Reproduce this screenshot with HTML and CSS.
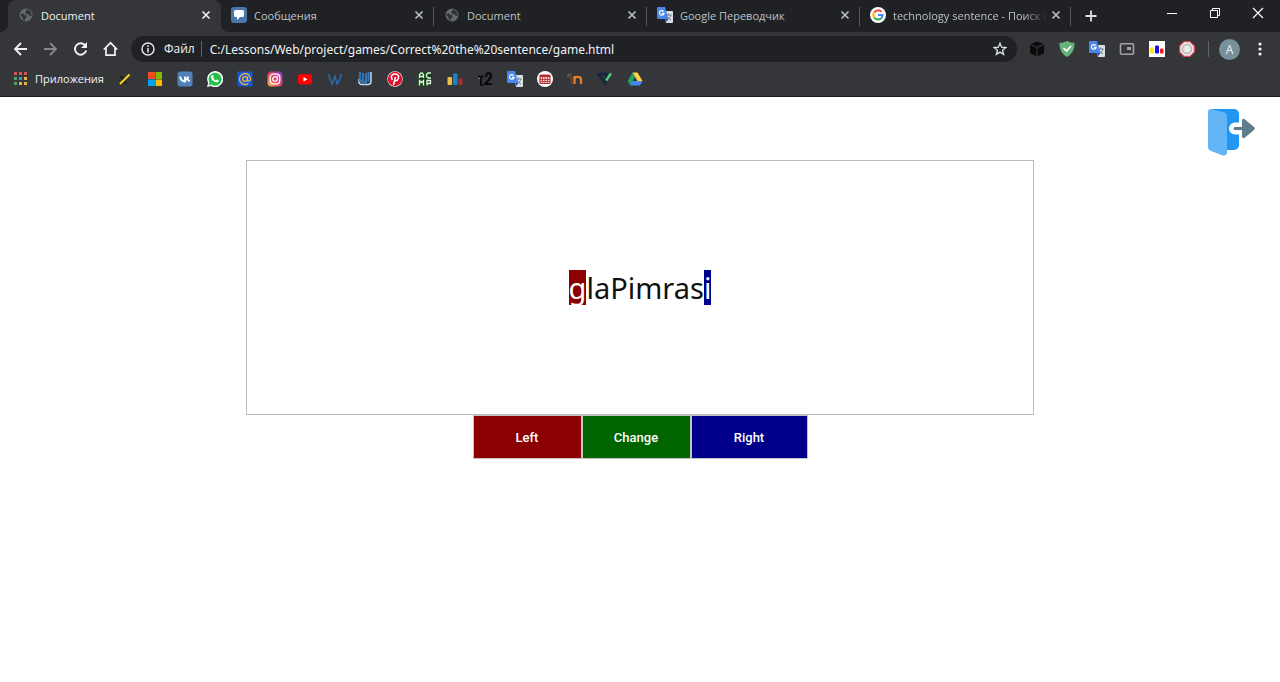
FILE: index.html
```
<!DOCTYPE html>
<html lang="ru">
<head>
<meta charset="utf-8">
<title>Document</title>
<link rel="stylesheet" href="styles.css">
</head>
<body>
<svg class="defs" aria-hidden="true">
  <symbol id="globe" viewBox="0 0 16 16"><circle cx="8" cy="8" r="6.500" fill="#65686c"/><path d="M2 7l3-.5 1.500 1.500 2 .5v2l-1.500 1-.5 2.500-1.500-1.500-.5-2zM8 2.200l2.500.6 2.500 2.700.8 3.500-2.300-.2-1-1.800-2 .3-1.500-1.800 1.500-1.300z" fill="#303134"/></symbol>
  <symbol id="close" viewBox="0 0 16 16"><path d="M4.500 4.500l7 7m0-7l-7 7" stroke="currentColor" stroke-width="1.600" fill="none"/></symbol>
  <symbol id="translate" viewBox="0 0 16 16"><path d="M6 4h9a1 1 0 0 1 1 1v10a1 1 0 0 1-1 1H9z" fill="#dcdfe3"/><path d="M8.500 8h6M11.500 6.500V8M14 8c-.5 2-2.500 4-4 5M10 9.500c1 1.500 2.500 3 4 3.500" stroke="#6f8089" fill="none"/><path d="M1 0h7l3.500 12H1a1 1 0 0 1-1-1V1a1 1 0 0 1 1-1z" fill="#4a86ec"/><path d="M8 12h3.500L9 15.500z" fill="#3152b5"/><path d="M6.700 4.500A2.300 2.300 0 1 0 7.100 6.300H4.900" stroke="#fff" stroke-width="1.200" fill="none"/></symbol>
</svg>

<header class="browser">
  <div class="tabstrip">
    <div class="tab active"><svg class="icon"><use href="#globe"/></svg><span class="tab-title">Document</span><button class="close" aria-label="Закрыть"><svg class="icon"><use href="#close"/></svg></button></div>
    <div class="tab"><svg class="icon" viewBox="0 0 16 16"><rect width="16" height="16" rx="3" fill="#4a76a8"/><path d="M4.500 3h7A1.500 1.500 0 0 1 13 4.500v4a1.500 1.500 0 0 1-1.500 1.500H9l-3 3v-3H4.500A1.500 1.500 0 0 1 3 8.500v-4A1.500 1.500 0 0 1 4.500 3z" fill="#fff"/></svg><span class="tab-title">Сообщения</span><button class="close" aria-label="Закрыть"><svg class="icon"><use href="#close"/></svg></button></div>
    <div class="tab"><svg class="icon"><use href="#globe"/></svg><span class="tab-title">Document</span><button class="close" aria-label="Закрыть"><svg class="icon"><use href="#close"/></svg></button></div>
    <div class="tab"><svg class="icon"><use href="#translate"/></svg><span class="tab-title">Google Переводчик</span><button class="close" aria-label="Закрыть"><svg class="icon"><use href="#close"/></svg></button></div>
    <div class="tab"><svg class="icon" viewBox="0 0 16 16"><circle cx="8" cy="8" r="8" fill="#fff"/><g fill="none" stroke-width="2"><path d="M4.300 5.300A4.600 4.600 0 0 1 11.300 4.700" stroke="#ea4335"/><path d="M4.300 10.700a4.600 4.600 0 0 1 0-5.400" stroke="#fbbc05"/><path d="M11.200 11.300a4.600 4.600 0 0 1-6.900-.6" stroke="#34a853"/><path d="M8 8h4.600a4.600 4.600 0 0 1-1.400 3.300" stroke="#4285f4"/></g></svg><span class="tab-title faded">technology sentence - Поиск в</span><button class="close" aria-label="Закрыть"><svg class="icon"><use href="#close"/></svg></button></div>
    <button class="new-tab" aria-label="Новая вкладка"><svg class="icon" viewBox="0 0 16 16"><path d="M8 2.500v11M2.500 8h11" stroke="#dee1e6" stroke-width="1.800"/></svg></button>
    <div class="window-controls">
      <button aria-label="Свернуть"><svg class="icon" viewBox="0 0 16 16"><path d="M3 8.500h10" stroke="#fff"/></svg></button>
      <button aria-label="Развернуть"><svg class="icon" viewBox="0 0 16 16"><path d="M3.500 5.500h7v7h-7zM5.500 5.500v-2h7v7h-2" fill="none" stroke="#fff"/></svg></button>
      <button aria-label="Закрыть окно"><svg class="icon" viewBox="0 0 16 16"><path d="M3 3l10 10M13 3L3 13" stroke="#fff" stroke-width="1.200"/></svg></button>
    </div>
  </div>

  <div class="toolbar">
    <button aria-label="Назад"><svg class="icon" viewBox="0 0 16 16"><path d="M14 8H2M8 2L2 8l6 6" fill="none" stroke="#f1f3f4" stroke-width="1.800"/></svg></button>
    <button aria-label="Вперёд"><svg class="icon" viewBox="0 0 16 16"><path d="M1 8h12M7 2l6 6-6 6" fill="none" stroke="#85878a" stroke-width="1.800"/></svg></button>
    <button aria-label="Обновить"><svg class="icon" viewBox="0 0 16 16"><path d="M12 4.200A5.700 5.700 0 1 0 13.200 9.500" fill="none" stroke="#f1f3f4" stroke-width="1.900"/><path d="M14 1v6H8z" fill="#f1f3f4"/></svg></button>
    <button aria-label="Домой"><svg class="icon" viewBox="0 0 16 16"><path d="M.8 8.500L7.500 1.800l6.700 6.700M3 7v7.200h9V7" fill="none" stroke="#f1f3f4" stroke-width="1.700"/></svg></button>
    <form class="omnibox">
      <svg class="icon" viewBox="0 0 16 16"><circle cx="8" cy="8" r="6" fill="none" stroke="#e8eaed" stroke-width="1.400"/><path d="M8 7v4.500M8 4.300v1.600" stroke="#e8eaed" stroke-width="1.500"/></svg>
      <label class="scheme" for="url">Файл</label>
      <input id="url" class="url" type="text" value="C:/Lessons/Web/project/games/Correct%20the%20sentence/game.html">
      <button type="button" aria-label="Добавить в закладки"><svg class="icon" viewBox="0 0 16 16"><path d="M8 2.300l1.600 3.900 4.200.3-3.200 2.700 1 4.100L8 11.100l-3.600 2.200 1-4.100-3.200-2.700 4.200-.3z" fill="none" stroke="#dee1e6" stroke-width="1.300"/></svg></button>
    </form>
    <div class="extensions">
      <button aria-label="Куб"><svg class="icon" viewBox="0 0 16 16"><path d="M8 .5l7 2.800v9L8 15.500l-7-3.200v-9z" fill="#0b0b0c"/><path d="M1.500 3.500L8 6.500l6.500-3M8 6.500V15" stroke="#3f4043" fill="none"/></svg></button>
      <button aria-label="Защита"><svg class="icon" viewBox="0 0 16 16"><path d="M8 0c2.500 1.300 5 1.800 7.500 1.800C15.700 8 13.500 13 8 16 2.500 13 .3 8 .5 1.800 3 1.800 5.500 1.300 8 0z" fill="#67b279"/><path d="M4.500 7l3 3 4.500-5" fill="none" stroke="#fff" stroke-width="1.700"/></svg></button>
      <button aria-label="Переводчик"><svg class="icon"><use href="#translate"/></svg></button>
      <button aria-label="Картинка в картинке"><svg class="icon" viewBox="0 0 16 16"><rect x="1.500" y="2.800" width="13" height="10.400" rx="1" fill="none" stroke="#9fa1a4" stroke-width="1.600"/><rect x="8" y="6" width="4" height="3" fill="#9fa1a4"/></svg></button>
      <button aria-label="Статистика"><svg class="icon" viewBox="0 0 16 16"><path fill="#fff" d="M0 0h16v16H0z"/><rect x="1" y="6.500" width="3.800" height="6" rx="1" fill="#f5e02a"/><rect x="6" y="4.500" width="4" height="8" rx="1" fill="#1713e6"/><rect x="11" y="7.500" width="3.500" height="5" rx="1" fill="#ee1c25"/></svg></button>
      <button aria-label="Блокировщик"><svg class="icon" viewBox="0 0 16 16"><path d="M5 .7h6L15.300 5v6L11 15.300H5L.7 11V5z" fill="#f0eeee" stroke="#d9475c" stroke-width="1.200"/><circle cx="8" cy="8" r="4.600" fill="#ddd" stroke="#b5b2b2" stroke-width="1.400"/><path d="M7 6h1.200a1 1 0 0 1 0 4H7z" fill="none" stroke="#f5f5f5" stroke-width="1.200"/></svg></button>
    </div>
    <button class="avatar" aria-label="Профиль">A</button>
    <button aria-label="Меню"><svg class="icon" viewBox="0 0 16 16" fill="#f1f3f4"><circle cx="8" cy="3" r="1.600"/><circle cx="8" cy="8" r="1.600"/><circle cx="8" cy="13" r="1.600"/></svg></button>
  </div>

  <nav class="bookmarks">
    <a class="apps" href="#"><svg class="icon" viewBox="0 0 16 16"><path fill="#d9534a" d="M2 1h3v3H2zM7 1h3v3H7zM12 1h3v3h-3z"/><path fill="#4aa564" d="M2 6h3v3H2zM2 11h3v3H2z"/><path fill="#4a8ae8" d="M7 6h3v3H7z"/><path fill="#e3b341" d="M12 6h3v3h-3zM7 11h3v3H7zM12 11h3v3h-3z"/></svg>Приложения</a>
    <a href="#" aria-label="Карандаш"><svg class="icon" viewBox="0 0 16 16"><path d="M2 4l5 2 4 8-3-2-4 2 1-4z" fill="#202124"/><path d="M3 13L12.500 3.500" stroke="#f3d31b" stroke-width="2.200"/></svg></a>
    <a href="#" aria-label="Microsoft"><svg class="icon" viewBox="0 0 16 16"><path fill="#f25022" d="M1 1h7v7H1z"/><path fill="#7fba00" d="M8.500 1H15v7H8.500z"/><path fill="#00a4ef" d="M1 8.500h7V15H1z"/><path fill="#ffb900" d="M8.500 8.500H15V15H8.500z"/></svg></a>
    <a href="#" aria-label="VK"><svg class="icon" viewBox="0 0 16 16"><rect x=".5" y=".5" width="15" height="15" rx="2.500" fill="#5181b8"/><path d="M3 5.500c.7 3 2.200 5 5 5v-5M8 8c2 0 3-1.200 3.500-2.500M8.500 8c2 0 3.200 1 4 2.500" fill="none" stroke="#fff" stroke-width="1.800"/></svg></a>
    <a href="#" aria-label="WhatsApp"><svg class="icon" viewBox="0 0 16 16"><path d="M0 16l1.200-4A8 8 0 1 1 4 14.900z" fill="#fff"/><path d="M1.500 14.500l1-3A6.500 6.500 0 1 1 4.500 13.600z" fill="#25c04d"/><path d="M5 4l1.200.2.700 1.800-.7.900c.6 1.200 1.500 2 2.800 2.600l.9-1 1.900.9c-.1 1.600-1.300 2.200-2.600 1.900C6.500 10.700 4.500 8.500 4 6.200 3.900 5.200 4.300 4.400 5 4z" fill="#fff"/></svg></a>
    <a href="#" aria-label="Почта"><svg class="icon" viewBox="0 0 16 16"><rect x=".5" y=".5" width="15" height="15" rx="1" fill="#1558d6"/><circle cx="8" cy="8" r="2.400" fill="none" stroke="#eeb54c" stroke-width="1.300"/><path d="M10.500 5.500v3.300c0 2 3 2 3-.8a5.500 5.500 0 1 0-2.200 4.400" fill="none" stroke="#eeb54c" stroke-width="1.300"/></svg></a>
    <a href="#" aria-label="Instagram"><svg class="icon" viewBox="0 0 16 16"><defs><linearGradient id="insta" x1="0" y1="1" x2="1" y2="0"><stop stop-color="#fdc04e"/><stop offset=".45" stop-color="#ed3f5c"/><stop offset="1" stop-color="#7a3ed0"/></linearGradient></defs><rect x=".5" y=".5" width="15" height="15" rx="4" fill="url(#insta)"/><rect x="3.200" y="3.200" width="9.600" height="9.600" rx="3" fill="none" stroke="#fff" stroke-width="1.300"/><circle cx="8" cy="8" r="2.300" fill="none" stroke="#fff" stroke-width="1.300"/><circle cx="10.800" cy="5.200" r=".7" fill="#fff"/></svg></a>
    <a href="#" aria-label="YouTube"><svg class="icon" viewBox="0 0 16 16"><rect x="1" y="3" width="14" height="10.500" rx="2.500" fill="#f00"/><path d="M6.500 6l4 2.200-4 2.300z" fill="#fff"/></svg></a>
    <a href="#" aria-label="W"><svg class="icon" viewBox="0 0 16 16"><path d="M1.500 3.500c1 3 2 6 3.500 9.500L8 5.500l2.200 7.500C12 10 13.500 6.500 14.500 3" fill="none" stroke="#276db0" stroke-width="1.500"/></svg></a>
    <a href="#" aria-label="Wiki"><svg class="icon" viewBox="0 0 16 16"><path d="M2 8v2.500c0 1.500 1 3 3 3h6c2 0 3-1.500 3-3V1" fill="none" stroke="#b5dcf4" stroke-width="1.500"/><path d="M3 1v9h2M6 2v9h3V2M11.500 1v9.500" fill="none" stroke="#3277ba" stroke-width="2"/></svg></a>
    <a href="#" aria-label="Pinterest"><svg class="icon" viewBox="0 0 16 16"><circle cx="8" cy="8" r="7.700" fill="#fff"/><circle cx="8" cy="8" r="7.200" fill="#db1130"/><path d="M6.500 14L8.500 6M5.300 9C2.800 4 6 3 8.200 3c3.300 0 4 2.500 3 4.800C10 10.500 8 9.800 7.600 9" fill="none" stroke="#fff" stroke-width="1.500"/></svg></a>
    <a href="#" aria-label="ACMP"><svg class="icon" viewBox="0 0 16 16"><path fill="#16431c" d="M1 1h14v14H1z"/><path d="M2.500 7V3.500L4 2h1l1.500 1.500V7M2.500 5.500h4M14 2h-3L9.500 3.500v2L11 7h3M2.500 14.500V9.500l2 2 2-2v5M10 14.500V9.500h3.500v3H10" fill="none" stroke="#e6f4e4" stroke-width="1.300"/></svg></a>
    <a href="#" aria-label="Диаграмма"><svg class="icon" viewBox="0 0 16 16"><rect x=".5" y="6" width="4.500" height="8" rx="1" fill="#edbd45"/><rect x="6" y="2.500" width="4.500" height="11.500" rx="1" fill="#1787be"/><rect x="11.500" y="7.500" width="4" height="6.500" rx="1" fill="#b02d32"/></svg></a>
    <a href="#" aria-label="t2"><svg class="icon" viewBox="0 0 16 16"><path d="M1 5.500h6M4 5.500V14M3 14h3" fill="none" stroke="#08090a" stroke-width="1.700"/><path d="M9 6c0-5 5-5 5-1 0 3-4 5-6 8h7" fill="none" stroke="#08090a" stroke-width="2.200"/><path d="M1 7.500h2" stroke="#77797c"/></svg></a>
    <a href="#" aria-label="Google Переводчик"><svg class="icon"><use href="#translate"/></svg></a>
    <a href="#" aria-label="Календарь"><svg class="icon" viewBox="0 0 16 16"><circle cx="8" cy="8" r="8" fill="#fff"/><rect x="3" y="4" width="10" height="8.500" rx="1" fill="#f4d7d7" stroke="#b42b30" stroke-width="1.200"/><path d="M3 5h10" stroke="#b42b30" stroke-width="2"/><path d="M3 8.500h10M3 10.500h10M5.500 6v6M8 6v6M10.500 6v6" stroke="#b42b30" stroke-width=".8"/></svg></a>
    <a href="#" aria-label="in"><svg class="icon" viewBox="0 0 16 16"><path d="M1 6h4M4.500 5v8" stroke="#62432f" stroke-width="2"/><path d="M0 5l4-2" stroke="#77604f" stroke-width="1.400"/><path d="M7.500 5v8M7.500 8.500c0-3.500 6.500-3.500 6.500 0V13" fill="none" stroke="#e77c27" stroke-width="2.300"/></svg></a>
    <a href="#" aria-label="Проверка"><svg class="icon" viewBox="0 0 16 16"><path d="M1.500 3h8L8 12z" fill="none" stroke="#14263f" stroke-width="2.400"/><path d="M9 9.500L14 2.500" stroke="#4bd07b" stroke-width="2.300"/></svg></a>
    <a href="#" aria-label="Google Диск"><svg class="icon" viewBox="0 0 16 16"><path d="M5.500 1.500L8 6l-5 8.500L.7 10z" fill="#1fa463"/><path d="M5.500 1.500h5l5 8.500h-5z" fill="#ffd04b"/><path d="M5.500 10h10L13 14.500H3z" fill="#4688f4"/></svg></a>
  </nav>
</header>

<main class="game">
  <a class="exit" href="#" aria-label="Выход"><svg class="exit-icon" viewBox="0 0 48 48"><path d="M5 1h22a5 5 0 0 1 5 5v31a5 5 0 0 1-5 5H17L5 2z" fill="#2196f3"/><path d="M4 1l13 3.500c2 .5 3 2 3 4V44c0 2.500-1.500 4-4 3.500l-12-4.500c-2-.8-3-2-3-4V4c0-2 1-3.300 3-3z" fill="#64b5f6"/><path d="M33 14.500h-5a6 6 0 0 0 0 12h5z" fill="#fff"/><path d="M28 19h7v-6c0-2.500 1.500-3 3-1.500l9 7.500c1 1 1 2 0 3l-9 7.500c-1.500 1.500-3 .5-3-1.500v-6h-7a1.500 1.500 0 0 1 0-3z" fill="#607d8b"/></svg></a>
  <section class="board">
    <p class="word"><span class="letter left">g</span>laPimras<span class="letter right">i</span></p>
  </section>
  <div class="actions">
    <button class="left">Left</button>
    <button class="change">Change</button>
    <button class="right">Right</button>
  </div>
</main>
</body>
</html>
```
FILE: styles.css
```
* { box-sizing: border-box; }

body {
  margin: 0;
  background: #fff;
  font-family: "Noto Sans", "Open Sans", sans-serif;
}

button {
  padding: 0;
  border: 0;
  background: none;
  color: inherit;
  font: inherit;
}

a { color: inherit; text-decoration: none; }

.defs { display: none; }

.icon { display: block; flex: none; width: 16px; height: 16px; }

.browser {
  background: #35363a;
  border-bottom: 1px solid #1c1d1f;
  color: #f1f3f4;
  font-family: "Open Sans", "Noto Sans", sans-serif;
  font-size: 12px;
}

.tabstrip {
  display: flex;
  height: 32px;
  padding-left: 8px;
  background: #202124;
}

.tab {
  position: relative;
  display: flex;
  flex: 0 1 213px;
  align-items: center;
  gap: 7px;
  min-width: 0;
  padding: 0 7px 2px 10px;
  color: #bdc1c6;
  font-size: 11px;
}

.tab:nth-child(5) { flex-basis: 211px; }

.tab.active {
  border-radius: 8px 8px 0 0;
  background: #35363a;
  color: #f1f3f4;
}

.tab.active::before,
.tab.active::after {
  position: absolute;
  bottom: 0;
  width: 8px;
  height: 8px;
  content: "";
}

.tab.active::before {
  right: 100%;
  background: radial-gradient(circle at 0 0, #202124 8px, #35363a 8px);
}

.tab.active::after {
  left: 100%;
  background: radial-gradient(circle at 100% 0, #202124 8px, #35363a 8px);
}

.tab:not(.active)::after {
  position: absolute;
  top: 7px;
  right: 0;
  width: 1px;
  height: 19px;
  background: #55575b;
  content: "";
}

.tab-title { flex: 1; overflow: hidden; white-space: nowrap; }

.faded {
  margin-right: -6px;
  mask-image: linear-gradient(to right, #000 85%, transparent);
}

.new-tab { display: grid; width: 40px; padding-bottom: 1px; place-items: center; }

.window-controls {
  display: flex;
  height: 26px;
  margin-left: auto;
  padding-right: 1px;
}

.window-controls button { display: grid; width: 43px; place-items: center; }

.toolbar {
  display: flex;
  align-items: center;
  gap: 14px;
  height: 34px;
  padding: 0 12px 0 13px;
}

.omnibox {
  display: flex;
  flex: 1;
  align-items: center;
  gap: 8px;
  height: 26px;
  margin: 0 -2px;
  padding: 0 9px;
  border-radius: 13px;
  background: #202124;
}

.scheme { padding-right: 6px; border-right: 1px solid #5f6368; line-height: 16px; }

.url {
  flex: 1;
  min-width: 0;
  padding: 0;
  border: 0;
  outline: 0;
  background: none;
  color: #f1f3f4;
  font-family: "Noto Sans", sans-serif;
  font-size: 12px;
}

.extensions {
  display: flex;
  gap: 14px;
  padding-right: 13px;
  border-right: 1px solid #5f6368;
}

.avatar {
  width: 21px;
  height: 21px;
  margin: 0 -2px 0 -4px;
  border-radius: 50%;
  background: #78909c;
  text-align: center;
}

.bookmarks {
  display: flex;
  align-items: center;
  gap: 14px;
  height: 30px;
  padding: 0 12px 5px;
  font-size: 11px;
}

.apps { display: flex; align-items: center; gap: 7px; margin-right: -1px; }

.game { position: relative; padding-top: 63px; }

.exit { position: absolute; top: 11px; right: 25px; }

.exit-icon { display: block; width: 48px; height: 48px; }

.board {
  display: grid;
  width: 61.6%;
  height: 255px;
  margin: 0 auto;
  border: 1px solid #bbb;
  place-items: center;
}

.word {
  margin: 0;
  color: #111;
  font-size: 29px;
  line-height: 35px;
}

.letter { display: inline-block; color: #fff; }

.left { background: #8b0000; }

.change { background: #006400; }

.right { background: #00008b; }

.actions { display: flex; justify-content: center; }

.actions button {
  width: 109px;
  height: 44px;
  border: 1px solid #c4c4c4;
  color: #fff;
  font-family: Roboto, sans-serif;
  font-size: 13px;
  font-weight: 500;
}

.actions .right { width: 117px; }
```
